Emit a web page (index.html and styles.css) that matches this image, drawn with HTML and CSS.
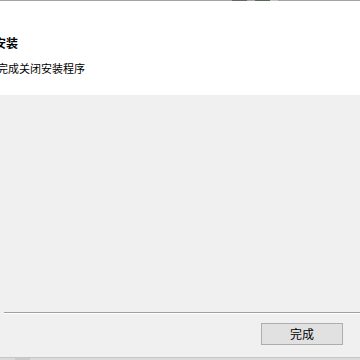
FILE: index.html
```html
<!DOCTYPE html>
<html lang="zh-CN">
<head>
<meta charset="utf-8">
<link rel="stylesheet" href="styles.css">
</head>
<body>
<div class="window">
  <div class="topline">
    <span class="seg s1"></span>
    <span class="seg s2"></span>
    <span class="seg s3"></span>
    <span class="seg s4"></span>
    <span class="seg s5"></span>
    <span class="seg s6"></span>
  </div>
  <div class="header">
    <div class="title">安装</div>
    <div class="subtitle">完成关闭安装程序</div>
  </div>
  <div class="body">
    <div class="content"></div>
    <div class="sep"></div>
    <div class="buttons">
      <button class="btn">完成</button>
    </div>
  </div>
  <div class="bottom">
    <span class="bseg b1"></span>
    <span class="bseg b2"></span>
    <span class="bseg b3"></span>
  </div>
</div>
</body>
</html>
```
FILE: styles.css
```css
html, body {
  margin: 0;
  padding: 0;
  width: 360px;
  height: 360px;
  overflow: hidden;
  background: #f0f0f0;
}
.window {
  display: flex;
  flex-direction: column;
  width: 360px;
  height: 360px;
  overflow: hidden;
  font-family: "Noto Sans CJK SC", "Noto Sans", sans-serif;
  color: #000;
}
.topline {
  display: flex;
  height: 1px;
  flex: none;
}
.seg { display: block; height: 1px; }
.s1 { width: 232px; background: #a3a3a3; }
.s2 { width: 15px; background: #5e6e5e; }
.s3 { width: 8px; background: #a8a8a8; }
.s4 { width: 15px; background: #5a6a5a; }
.s5 { width: 8px; background: #c2c2c2; }
.s6 { flex: 1; background: #a3a3a3; }
.header {
  background: #fff;
  height: 94px;
  flex: none;
  padding-top: 34px;
  box-sizing: border-box;
  overflow: hidden;
}
.title {
  font-size: 12px;
  font-weight: bold;
  line-height: 16px;
  margin-left: -6px;
  white-space: nowrap;
}
.subtitle {
  font-size: 11px;
  line-height: 16px;
  margin-top: 9px;
  margin-left: -3px;
  white-space: nowrap;
}
.body {
  background: #f0f0f0;
  height: 262px;
  flex: none;
  display: flex;
  flex-direction: column;
}
.content {
  height: 217px;
  flex: none;
}
.sep {
  margin-left: 4px;
  height: 1px;
  border-top: 1px solid #a0a0a0;
  background: #fff;
  flex: none;
}
.buttons {
  display: flex;
  justify-content: flex-end;
  padding-top: 9px;
  padding-right: 17px;
}
.btn {
  width: 82px;
  height: 22px;
  box-sizing: border-box;
  border: 1px solid #adadad;
  background: #e1e1e1;
  font-family: "Noto Sans CJK SC", "Noto Sans", sans-serif;
  font-size: 12px;
  line-height: 18px;
  padding: 0;
  color: #000;
  border-radius: 0;
}
.bottom {
  display: flex;
  height: 3px;
  flex: none;
  border-top: 1px solid #c6c6c6;
  box-sizing: border-box;
}
.bseg { display: block; height: 2px; }
.b1 { width: 15px; background: #dadada; }
.b2 { width: 15px; background: #cacaca; }
.b3 { flex: 1; background: #dadada; }
```
